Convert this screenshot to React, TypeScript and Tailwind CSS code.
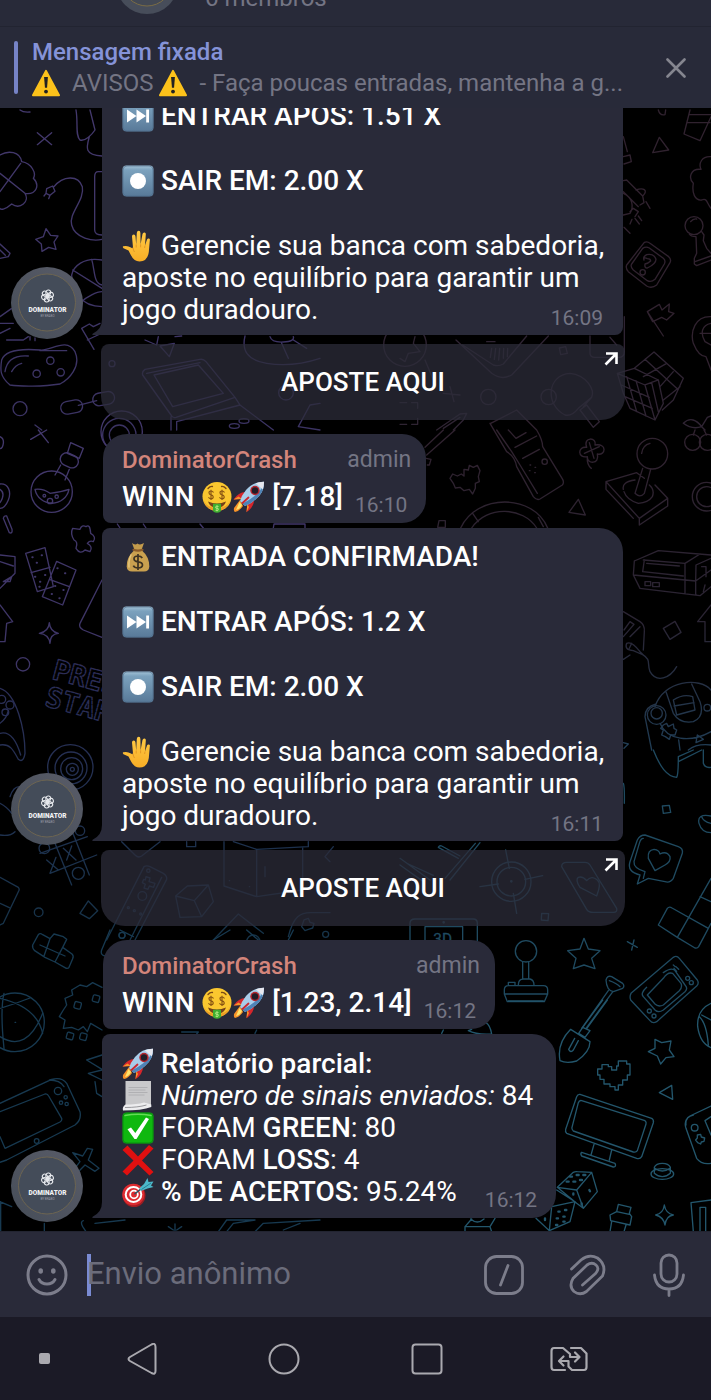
import type { ReactNode } from "react"
import { clsx } from "clsx"

const emojiClass = "-my-1 inline-block h-8 w-8 align-[-3px]"

/* ---------- Emoji ---------- */

function Warning() {
  return (
    <svg viewBox="0 0 32 32" className="inline-block h-7 w-7 shrink-0" role="img" aria-label="aviso">
      <path d="M16 2 31 30H1Z" fill="#fcc21b" stroke="#fcc21b" strokeWidth="2" strokeLinejoin="round" />
      <path d="M13.800 9h4.400l-1 12.500h-2.400Z" fill="#222" />
      <circle cx="16" cy="25.800" r="2.200" fill="#222" />
    </svg>
  )
}

function KeyShape({ children }: { children: ReactNode }) {
  return (
    <svg viewBox="0 0 32 32" className={emojiClass} aria-hidden="true">
      <defs>
        <linearGradient id="key" x1="0" y1="0" x2="0" y2="1">
          <stop offset="0" stopColor="#a5c4d8" />
          <stop offset=".15" stopColor="#7ba1bd" />
          <stop offset="1" stopColor="#587998" />
        </linearGradient>
      </defs>
      <rect x=".5" y=".5" width="31" height="31" rx="4" fill="url(#key)" />
      <rect x="1" y="1" width="30" height="30" rx="4" fill="none" stroke="#4c6d8b" strokeOpacity=".6" />
      {children}
    </svg>
  )
}

function NextTrack() {
  return (
    <KeyShape>
      <path d="M5 9.500 14.500 16 5 22.500ZM14.500 9.500 24 16l-9.500 6.500ZM24.200 9.500h2.800v13h-2.800Z" fill="#fff" />
    </KeyShape>
  )
}

function Record() {
  return (
    <KeyShape>
      <circle cx="16" cy="16" r="8" fill="#fff" />
    </KeyShape>
  )
}

function Hand() {
  return (
    <svg viewBox="0 0 32 32" className={emojiClass} aria-hidden="true">
      <defs>
        <linearGradient id="hand" x1="0" y1="0" x2="0" y2="1">
          <stop offset="0" stopColor="#ffca45" />
          <stop offset="1" stopColor="#f8ae26" />
        </linearGradient>
      </defs>
      <path
        d="M10 6.500Q10 4.500 11.700 4.500T13.500 6.500L14.200 14.500 14.800 3Q15 .8 16.700.8T18.400 3L18.600 14.300 20.500 4Q21 2.300 22.500 2.500T23.800 4.500L23 15.500 25 9.500Q25.700 8 27 8.500T27.800 10.500L26.800 22Q25.500 31.500 17.500 31.500 12 31.500 8.800 25L6.500 20.500 1.500 18.200Q.3 17 1.200 16.300 5.500 15.300 9 17.500 10.500 19 11 17.500Z"
        fill="url(#hand)"
      />
      <path d="M14.200 14.500v3M18.600 14.300v3M23 15.500l-.4 2.500M11 17.500q.3 3 1.500 4.500" stroke="#e09322" strokeWidth=".9" fill="none" />
    </svg>
  )
}

function MoneyBag() {
  return (
    <svg viewBox="0 0 32 32" className={emojiClass} aria-hidden="true">
      <path d="M10 2Q13 4.500 15.500 2.500 18 4.500 22 2L19.500 9H12.500Z" fill="#c39b4c" />
      <path d="M12.500 9H19.500Q27.500 16 27.300 25.500 27 30.500 22 30.500H10Q5 30.500 4.700 25.500 4.500 16 12.500 9Z" fill="#c9a04f" />
      <path d="M9 14Q6.500 19 7 26" stroke="#e4c67e" strokeWidth="1.500" fill="none" strokeLinecap="round" />
      <path d="M11.500 8.800q4.500 1.800 9 0" stroke="#8a5b2a" strokeWidth="2.200" fill="none" strokeLinecap="round" />
      <path d="M20.300 17Q19 15 16 15q-4 0-4 2.800 0 2.500 4 3 4.500.5 4.500 3.200T16 27q-3.500 0-4.700-2.300M16 13v16" stroke="#3d3222" strokeWidth="1.700" fill="none" />
    </svg>
  )
}

function MoneyFace() {
  return (
    <svg viewBox="0 0 32 32" className={emojiClass} aria-hidden="true">
      <circle cx="16" cy="15.500" r="14.500" fill="#fbc72f" />
      <path d="M2.500 19Q6 30 16 30t13.500-11Q26 27 16 27T2.500 19Z" fill="#ee9d26" />
      <path d="M7 7.500q2-2.300 4.500-2M25 7.500q-2-2.300-4.500-2" stroke="#7a4a16" strokeWidth="1.300" fill="none" strokeLinecap="round" />
      <path
        d="M12.500 11.500q-.8-1.500-2.500-1.500-2 0-2 1.800t2 2 2.200 2-2.200 2q-1.700 0-2.500-1.500M10 8.700v10.200M23.500 11.500q-.8-1.500-2.500-1.500-2 0-2 1.800t2 2 2.200 2-2.200 2q-1.700 0-2.500-1.500M21 8.700v10.200"
        stroke="#8a5613"
        strokeWidth="1.200"
        fill="none"
      />
      <path d="M7 20.500Q16 24.500 25 20.500 23 27 16 27T7 20.500Z" fill="#75421a" />
      <path d="M12 22.800h8V29q0 2.800-4 2.800T12 29Z" fill="#3fae31" />
      <path d="M17.500 25.500q-3-1-3 .6t1.500 1.200 1.500 1.300-3 .6M16 24.300v6" stroke="#b6ec83" strokeWidth=".9" fill="none" />
    </svg>
  )
}

function Rocket() {
  return (
    <svg viewBox="0 0 32 32" className={emojiClass} aria-hidden="true">
      <path d="M7 19 1 27q-.5 3.500 1 4 4-.5 8-6Z" fill="#f79329" />
      <path d="M6.500 21 3 29q4-.5 6-5Z" fill="#fde36b" />
      <path d="M13 11Q6 10.500.5 18.500L9 18ZM21 19Q21 26 13.500 31.300L14.300 23Z" fill="#d5262c" />
      <path d="M.5 18.500 5.500 15.500 9 18ZM13.500 31.300 16 26 14.300 23Z" fill="#f79329" />
      <path d="M31 .8Q20 .5 13 9 8.500 14.500 7 20L12 25q6.500-2.500 11-7Q31.500 11 31 .8Z" fill="#a8cdea" />
      <path d="M31 .8Q29 9.500 21.500 15 16 19.500 9.500 22.500L12 25q6.500-2.500 11-7Q31.500 11 31 .8Z" fill="#4e83b7" />
      <path d="M31 .8Q26.500.8 22.800 2.300L29.700 8.500Q31.200 4.800 31 .8Z" fill="#e7e7ee" />
      <circle cx="22" cy="9.500" r="4.700" fill="#b4262f" />
      <circle cx="22" cy="9.500" r="3.200" fill="#211d29" />
      <path d="M15.500 16.500 9.500 22" stroke="#cc2730" strokeWidth="1.800" strokeLinecap="round" />
    </svg>
  )
}

function PageCurl() {
  return (
    <svg viewBox="0 0 32 32" className={emojiClass} aria-hidden="true">
      <path d="M3.500 1H29V26H3.500Z" fill="#c9c9cb" />
      <path d="M6.500 7.500h19M6.500 10h17M6.500 12.500h19M6.500 15h16" stroke="#b0b0b3" strokeWidth="1" />
      <path d="M3.500 24.500Q15 24.500 22 22.500L29.300 24.500V27Q20 30.500 1 30.500 0 27 3.500 24.500Z" fill="#ececee" />
      <path d="M3 27.500Q16 27.500 24.500 25" stroke="#98989c" strokeWidth="1" fill="none" />
    </svg>
  )
}

function CheckMark() {
  return (
    <svg viewBox="0 0 32 32" className={emojiClass} aria-hidden="true">
      <rect x=".5" y=".5" width="31" height="31" rx="4" fill="#0fb80f" />
      <rect x="1" y="1" width="30" height="30" rx="4" fill="none" stroke="#067f10" strokeOpacity=".7" />
      <path d="M3 3.500Q16 1 29 3.500" stroke="#63dd55" strokeWidth="1.500" fill="none" strokeLinecap="round" />
      <path d="M5.500 17.300 9 15.500 13.300 21 24 5.500 27 7 14.500 27H12.500Z" fill="#fff" />
    </svg>
  )
}

function CrossMark() {
  return (
    <svg viewBox="0 0 32 32" className={emojiClass} aria-hidden="true">
      <path d="M5.500 1.500 16 12.500 27 1 31.500 4.500 20 16.500 31.500 28 27.500 31.500 16 20.500 5 31.500.5 27.500 11.500 16.500.5 6Z" fill="#e01010" />
    </svg>
  )
}

function Dart() {
  return (
    <svg viewBox="0 0 32 32" className={emojiClass} aria-hidden="true">
      <ellipse cx="12" cy="19.500" rx="11.500" ry="11.500" fill="#9e1d22" />
      <ellipse cx="11.300" cy="18.500" rx="11" ry="10.800" fill="#dd2b30" />
      <ellipse cx="11.500" cy="18.500" rx="7.800" ry="7.500" fill="none" stroke="#fff" strokeWidth="2" />
      <circle cx="12" cy="18.500" r="3.800" fill="#dd2b30" stroke="#fff" strokeWidth="1.800" />
      <path d="M12.500 18.200 22 10.500" stroke="#2f5260" strokeWidth="1.500" />
      <path d="M17.500 12 22 8 25.500 2 26.500 6 31.500 5.500 29 9.500 31.500 11 25.500 12.500 19 15Z" fill="#4cb8c9" />
      <path d="M19.500 13.500 29 7" stroke="#2a7f93" strokeWidth="1" />
    </svg>
  )
}

/* ---------- Wallpaper ---------- */

// Every patch is drawn on a grid three times finer than the screen.
function Patch({ x, y, children }: { x: number; y: number; children: ReactNode }) {
  return <g transform={`translate(${x} ${y}) scale(0.33333)`}>{children}</g>
}

function Wallpaper() {
  return (
    <svg
      viewBox="0 108 711 1123"
      preserveAspectRatio="xMidYMid slice"
      className="absolute inset-0 h-full w-full"
      fill="none"
      strokeWidth="4"
      strokeLinecap="round"
      strokeLinejoin="round"
      aria-hidden="true"
    >
      <defs>
        <linearGradient id="wallA" gradientUnits="userSpaceOnUse" x1="0" y1="0" x2="0" y2="960">
          <stop offset="0" stopColor="#43386c" />
          <stop offset="1" stopColor="#3b3363" />
        </linearGradient>
        <linearGradient id="wallE" gradientUnits="userSpaceOnUse" x1="0" y1="0" x2="0" y2="900">
          <stop offset="0" stopColor="#2f2d5a" />
          <stop offset="1" stopColor="#153348" />
        </linearGradient>
        <linearGradient id="wallC" gradientUnits="userSpaceOnUse" x1="0" y1="0" x2="0" y2="960">
          <stop offset="0" stopColor="#30222f" />
          <stop offset=".6" stopColor="#2a2433" />
          <stop offset="1" stopColor="#203d55" />
        </linearGradient>
      </defs>

      <g stroke="url(#wallA)">
        <Patch x={0} y={110}>
          <path d="M112 68 155 104M155 68 112 104" />
          <path d="M0 135C25 120 60 125 65 155C95 160 110 190 100 205C120 225 110 255 75 250C90 275 60 300 35 282C15 300 0 300 0 295M0 245 62 160M0 190 75 250" />
          <path d="M160 232C190 195 235 195 247 230C255 270 205 310 215 345C225 385 280 395 306 388M140 236 158 228 165 244 150 256 138 250ZM138 250 132 258M150 256 146 266" />
          <path d="M138 356 152 376 174 378 162 396 168 418 146 412 126 424 124 402 107 388 130 380Z" />
          <path d="M306 185H295Q284 185 284 200V360Q284 375 306 375" />
          <path d="M228 0C235 40 225 75 240 90C255 95 275 75 285 60L270 0M268 80C260 110 250 135 306 138M60 0Q70 8 90 6" />
          <path d="M306 450C250 440 220 470 215 495C215 540 240 590 306 590M218 480 306 535M275 448C285 480 280 520 306 525M245 575C260 560 290 545 306 545" />
          <path d="M0 402 30 430 25 440 0 445M0 420 16 436M0 620 34 596M0 640H40M20 690H70L85 680M0 670 30 655M90 690V680M105 692V684" />
          <path d="M5 750C15 720 60 715 120 720C150 725 200 680 225 725C245 770 205 810 180 822C130 830 60 830 30 825C0 800 0 780 5 750ZM15 785C20 750 45 735 85 738M35 785Q45 765 65 760M120 722H200" />
          <circle cx="151" cy="752" r="11" />
          <circle cx="110" cy="791" r="11" />
          <circle cx="182" cy="787" r="11" />
          <path d="M245 655 268 642 280 650 300 640M262 690 300 672M245 655 282 718" />
          <path d="M480 708 523 700 508 740ZM435 690 470 705 475 680M525 680 545 678" />
          <path d="M735 678C725 720 740 750 800 760C850 768 900 765 960 745M810 680Q815 698 850 696T880 680M845 700 865 745M880 690 920 715" />
          <circle cx="336" cy="761" r="9" />
          <circle cx="60" cy="896" r="21" />
          <rect x="182" y="872" width="66" height="38" rx="19" transform="rotate(-10 215 891)" />
          <rect x="278" y="847" width="66" height="38" rx="19" transform="rotate(-10 311 866)" />
          <path d="M235 886 290 872" />
          <path d="M428 795Q425 785 435 778L600 748Q610 746 618 755L705 862L528 922Q518 925 513 915ZM462 795 595 765 670 850 518 890ZM440 790 600 758M513 920V960M705 862 720 885 530 935V960M720 885 820 960" />
          <ellipse cx="703" cy="948" rx="15" ry="7" />
          <ellipse cx="732" cy="933" rx="15" ry="7" />
          <circle cx="358" cy="975" r="50" />
          <circle cx="358" cy="975" r="30" />
          <circle cx="858" cy="848" r="22" />
          <path d="M105 945 125 960M895 950 930 885 960 880M895 950 960 960" />
        </Patch>
        <Patch x={0} y={430}>
          <path d="M92 28 140 0M115 0 145 38M0 20Q12 25 10 40T0 56" />
          <circle cx="155" cy="185" r="62" />
          <path d="M105 178Q130 175 150 190 185 185 207 178A52 52 0 0 1 105 178M165 135 182 105M195 150 208 118M212 38 250 55 238 85 202 70Z" />
          <rect x="180" y="72" width="56" height="38" rx="19" transform="rotate(25 208 91)" />
          <circle cx="133" cy="197" r="4" />
          <circle cx="170" cy="200" r="5" />
          <circle cx="150" cy="213" r="8" />
          <path d="M0 162C25 160 35 185 25 210Q15 235 0 235M0 178Q18 190 0 218M10 265 28 308Q38 312 36 298L20 258Q12 256 10 265" />
          <path d="M218 295 240 298Q245 283 258 290 270 280 272 310 290 320 280 335 270 330 262 340 280 350 270 365L255 360Q240 375 228 355 235 335 222 330 210 310 218 295Z" />
          <path d="M77 370 135 353 160 470 112 485ZM93 428 150 412M170 394 228 420 188 525 127 500ZM148 448 208 470" />
          <path d="M97 382h1M125 376h1M110 398h1M105 440h1M120 455h1M135 435h1M118 470h1M172 415h1M195 430h1M165 468h1M155 492h1M190 480h1M178 505h1" strokeWidth="6" />
          <path d="M0 375 45 380V430L0 475M0 395 40 408M10 455 35 440 30 455ZM0 525 38 575 20 580 15 635H0" />
          <path d="M306 450 240 580Q235 592 250 600L306 622" />
          <path d="M148 578Q150 605 175 610 150 612 150 640 146 612 118 610 146 605 148 578Z" />
          <circle cx="69" cy="703" r="20" />
          <circle cx="365" cy="5" r="62" />
          <path d="M352 282 360 294M430 282 438 294M600 282 610 294M820 294 822 282H915V294" />
        </Patch>
      </g>

      <g stroke="url(#wallE)">
        <Patch x={0} y={640}>
          <g transform="rotate(15 180 100)" fontFamily="DejaVu Sans Mono" fontSize="84" fontWeight="700" strokeDasharray="9 4">
            <text x="158" y="122">PRESS</text>
            <text x="158" y="206">START</text>
          </g>
          <path d="M0 145C50 160 75 270 75 340Q70 370 55 358C40 330 30 310 0 315M0 250Q20 235 24 215M0 280Q40 270 62 345" />
          <circle cx="5" cy="178" r="12" />
          <circle cx="30" cy="195" r="12" />
          <circle cx="16" cy="217" r="10" />
          <circle cx="217" cy="388" r="6" />
          <circle cx="217" cy="388" r="18" />
          <circle cx="215" cy="386" r="33" />
          <circle cx="213" cy="384" r="48" />
          <circle cx="211" cy="382" r="68" />
          <path d="M30 470Q40 440 58 440M0 490Q20 500 35 520M0 585Q30 590 45 575" />
          <path d="M120 640 262 590M150 700 290 645M165 610 215 735M215 570 268 705M140 660 175 690M168 652 150 700M190 625 228 660M215 618 200 660" />
          <circle cx="235" cy="700" r="18" />
          <circle cx="133" cy="625" r="16" />
          <circle cx="240" cy="572" r="14" />
          <path d="M0 712 55 742Q60 748 55 755L10 850 0 855M0 790 28 803M240 820 265 783 293 812 268 836Z" />
          <circle cx="116" cy="817" r="13" />
          <path d="M432 680Q440 675 450 680L490 700Q502 708 500 718L405 900M432 680 320 900M485 712 390 900" />
          <path d="M438 710 450 714 447 725 465 730 461 742 448 738 444 748 432 744 436 733 427 728 431 718 436 720Z" />
          <circle cx="445" cy="692" r="5" />
          <circle cx="427" cy="768" r="13" />
          <circle cx="385" cy="803" r="3" />
          <circle cx="403" cy="812" r="3" />
          <circle cx="422" cy="822" r="3" />
          <circle cx="366" cy="886" r="9" />
          <path d="M527 768 562 738 625 735 640 785 605 830 540 832ZM527 768 583 782 625 735M583 782 605 830" />
          <path d="M672 605V738L770 770V628L925 620V605M770 770 908 750V622M770 628 700 605M795 680V710M688 722h1M748 740h1" />
          <path d="M365 605 405 645Q415 655 425 648L480 605M560 605V620H587V605M640 900 715 822 790 880M865 890C880 830 900 815 940 818H990M912 840 925 835 930 847 942 850 938 864 925 868 915 872 905 860ZM1000 620 975 650 990 665" />
          <circle cx="760" cy="905" r="20" />
          <circle cx="977" cy="883" r="9" />
        </Patch>
      </g>

      <g stroke="#173950">
        <Patch x={0} y={930}>
          <path d="M98 45 115 14Q120 8 128 14L150 26 162 12 190 20 200 28 188 52 216 72Q222 78 218 86L207 112Q203 118 195 113L165 96 135 82 104 62Q96 54 98 45ZM150 26 132 78M188 52 165 96M120 45 195 78" />
          <path d="M360 0 400 20M330 0 305 60Q300 75 315 78M640 30 690 0M740 0 775 30M865 30 880 0" />
          <circle cx="366" cy="16" r="9" />
          <circle cx="45" cy="277" r="88" />
          <path d="M0 205Q110 230 128 310M0 235Q50 220 90 204M12 190Q0 240 12 355M0 320Q80 370 128 250M45 277h2" />
          <path d="M306 172 278 158 260 170 240 165 215 180 218 195 195 205 200 225 190 240 178 260 195 270 190 295 215 292 235 300 250 290 262 305 272 280 306 300" />
          <rect x="223" y="216" width="20" height="20" rx="4" transform="rotate(15 233 226)" />
          <rect x="278" y="196" width="20" height="20" rx="4" transform="rotate(15 288 206)" />
          <rect x="200" y="308" width="20" height="20" rx="4" transform="rotate(15 210 318)" />
          <rect x="240" y="310" width="20" height="20" rx="4" transform="rotate(15 250 320)" />
          <path d="M306 375 260 390 306 418M306 420 265 430 306 450M285 455 290 490 306 500" />
          <path d="M0 520 155 448Q185 440 200 460L240 545Q245 570 225 585L20 690 0 697M0 545 135 492Q142 490 146 498L185 565Q187 572 180 576L15 655 0 620M148 450Q180 450 192 470" />
          <circle cx="174" cy="483" r="11" />
          <circle cx="197" cy="502" r="5" />
          <circle cx="183" cy="518" r="5" />
          <circle cx="200" cy="522" r="5" />
          <circle cx="110" cy="633" r="7" />
          <path d="M218 668 248 678 262 655 278 658 265 690 297 715 285 724 255 705 235 725 222 718 240 695Z" />
          <path d="M0 815 35 830M2 815V905M133 880V905M250 872Q240 875 248 890L258 905M285 880 375 870M525 882V905M505 890 520 900M545 890 530 900M655 905 680 870H765M680 905 700 880 765 870M765 905 790 880 960 870M850 900 900 880" />
          <path d="M545 306H595L590 312M770 300 765 310" />
        </Patch>
      </g>

      <g stroke="#30222f">
        <Patch x={400} y={110}>
          <path d="M870 0 852 72 900 92 933 20M862 38H930M868 14H933M778 82 806 120 758 128ZM775 0Q780 18 795 14L797 0" />
          <path d="M933 140C905 138 895 160 903 178C870 175 865 205 880 220C875 250 885 272 905 270C922 262 920 280 933 295" />
          <path d="M670 212 680 210 728 258 732 278 720 285M670 245 715 290M708 240C730 232 745 240 730 256M670 250C698 262 702 290 690 310L670 315M690 305 700 295 715 305 705 320M715 318 725 332M705 325 718 342M696 328 690 342M738 275 750 295M672 352 690 370" />
          <path d="M670 80 682 125M670 140 690 135 694 155 672 162" />
          <circle cx="882" cy="347" r="27" />
          <path d="M868 372Q872 380 888 380L890 430 883 445V462L890 467 933 450M905 365 912 375 910 392 920 415 933 430M885 455 933 438M872 335Q880 325 890 327" />
          <path d="M733 397Q742 393 750 400L806 440Q815 448 810 458L770 525Q755 537 740 528L685 485Q676 475 680 465Z" />
          <path d="M728 415Q738 408 748 414L790 445Q798 452 793 462L765 508Q753 518 742 512L700 480Q690 470 695 462Z" />
          <path d="M732 450Q730 440 742 446 752 446 752 453 745 460 735 462 733 475 742 474 768 462 768 448 762 430 740 434 728 440 732 450" />
          <circle cx="728" cy="487" r="8" />
          <path d="M742 605 778 583 786 600 808 582 806 605 822 610 800 630 785 622 758 635ZM742 605 790 678" />
          <path d="M933 620C885 618 870 665 880 700C890 725 905 740 918 740L933 780M933 640C905 645 900 670 915 695L933 705M900 670H933" />
        </Patch>
      </g>

      <g stroke="#2f2433">
        <Patch x={400} y={110}>
          <path d="M652 790 735 825 765 930 690 895 670 850ZM652 790 703 775 775 810 735 825M775 810 790 880 765 930M703 775 762 726 850 805 820 870 787 900M735 748 830 835M800 760 730 800M820 785 780 830M840 830 790 870M664 825 748 862M675 860 757 895M680 800 710 905M708 812 738 918M755 818 775 905" />
          <path d="M495 915C435 885 440 795 510 790C560 795 585 840 575 862L535 895Q515 920 495 915ZM540 900 560 885 598 935 580 952ZM575 862 550 890" />
          <circle cx="446" cy="861" r="23" />
          <circle cx="265" cy="861" r="23" />
          <circle cx="15" cy="705" r="64" />
          <path d="M0 745 15 755 25 730 60 725 40 700 45 680M75 750 100 810M168 690 275 790Q305 812 335 795L445 678M188 705 280 765Q295 770 310 762L380 678M275 715 271 742M287 715 283 748M299 715 296 750M311 715 310 745M323 715 322 740M260 695H285" />
          <path d="M478 714 497 710 502 730 482 734ZM130 850 180 855M150 830 162 875M570 678V730Q570 742 585 742H655Q673 742 673 725V620M630 682 650 705" />
          <path d="M0 878H20M35 878H53V895M53 925V943H35M0 943H20M110 960 180 912 200 910 190 930 160 960M130 955 180 922" />
          <path d="M850 940C870 920 890 930 905 950L922 922 933 918M850 940C870 955 890 955 905 950L915 960" />
        </Patch>
      </g>

      <g stroke="url(#wallC)">
        <Patch x={400} y={430}>
          <path d="M270-20 320 65Q345 80 350 110L400 200Q410 212 420 207L487 165Q493 158 488 148L428 50Q428 30 410 0L350-60 272-20M290 0 335 65 360 105 412 190M325 0 348 25 378 8M345 52 410 18M368 85 418 58" />
          <circle cx="434" cy="95" r="8" />
          <path d="M388 122h2M405 112h2M390 105h2M404 128h2" />
          <path d="M80 75 165 0M75 52 130 0M78 85 93 88 88 105 82 105" />
          <path d="M150 145 158 132 172 138 184 132 192 138 192 118 205 120 208 106 220 112 232 106 240 122 235 140 238 155 226 160 226 175 218 192 208 178 192 182 180 172 166 174 160 160Z" />
          <path d="M560 52C548 18 592 22 585 45C622 38 618 78 592 72C600 105 560 102 562 80C532 86 532 48 560 52ZM553 70 598 50M568 38 582 85M562 80Q560 105 574 115" />
          <circle cx="757" cy="71" r="46" />
          <path d="M752 118 733 190Q720 205 705 190L728 115M725 70Q728 45 750 40M618 155 710 128 733 145M765 165 803 205 718 265 618 155V178L700 265M718 285 803 228V205M718 265V285M670 178Q665 155 705 150M748 165Q765 180 757 200 745 218 715 220 680 210 672 185" />
          <circle cx="878" cy="37" r="24" />
          <circle cx="922" cy="37" r="24" />
          <path d="M885 0 880 15M912 0 920 15M535 208 556 255 507 247Z" />
          <circle cx="920" cy="200" r="43" />
          <circle cx="920" cy="200" r="30" />
          <path d="M182 294C230 190 400 190 443 294M215 294C260 225 370 230 410 294M218 250 235 275M415 262 430 290M117 272H136V292H113Z" />
          <path d="M703 393 775 362 933 375M703 393 700 435 720 475 900 497 933 470M700 435 887 453 933 420M730 390 855 400 900 372M855 400V490M887 453V495M733 390 728 425 850 438M735 455H752V467H735ZM758 458H778V470H758ZM887 453 888 405 933 385M740 400 838 408M905 410H918V440M915 465 910 485" />
          <path d="M670 545 720 575Q735 585 733 605L730 660M690 675 670 688M672 600 690 575 702 583 670 620M720 590 690 620" />
          <path d="M680 640Q695 632 720 665L730 675 700 662Q672 660 680 640ZM695 640 688 655M728 674C755 690 740 700 750 725C770 760 810 745 830 710" />
          <path d="M790 595 825 574 843 607 810 628ZM933 525 893 575H915V635H933" />
          <path d="M765 830C790 750 900 740 933 780M768 822Q735 830 735 860L755 960M820 810Q850 790 878 800L885 840 830 855ZM822 828 882 818M798 785 820 850Q840 882 880 875 915 860 900 815L875 762M780 880C800 930 870 940 933 905M840 960 836 930M865 960Q890 940 933 945M888 938 892 915 910 928ZM670 938 685 942 672 955" />
          <path d="M790 885 800 880 805 890 820 882 822 895 830 900 825 915 812 915 808 928 796 920 785 915 790 900 782 895Z" />
          <circle cx="770" cy="855" r="28" />
          <circle cx="770" cy="850" r="17" />
          <circle cx="922" cy="833" r="10" />
        </Patch>
      </g>

      <g stroke="#1f4a60">
        <Patch x={400} y={750}>
          <path d="M760 0C780 50 800 80 830 82Q835 75 835 20M835 35 905 0M835 20 880 0M910 0V40Q915 55 933 52M787 168 808 166 812 187 790 190ZM933 198Q890 190 897 220 905 248 933 248M933 220Q910 215 905 200M670 100Q674 110 673 160" />
          <path d="M735 255 835 290Q850 295 847 310L820 385Q810 400 795 395L745 385 712 402 720 375Q680 365 690 335L712 270Q720 255 735 255ZM730 265Q722 265 718 280L702 335Q700 355 735 365L730 385" />
          <path d="M765 362 745 325Q742 300 762 298 778 300 780 312 800 302 810 320 813 335 795 345Z" />
          <path d="M933 385 832 562 885 594Q892 596 896 590L933 520M775 525 802 475Q808 468 816 474L925 535M775 525 832 562M900 440 933 455" />
          <path d="M552 565 565 597 600 602 575 625 585 656 552 645 520 656 528 625 503 602 540 597ZM682 575 712 592M702 570 695 600" />
          <circle cx="378" cy="604" r="32" />
          <path d="M368 636V685M386 636V685M355 705Q355 687 370 687H390Q402 690 402 705M325 707H430Q443 707 443 720V732L433 755H322L313 732V720Q313 707 325 707ZM313 732H443M325 705V697H345V705" />
          <path d="M693 730 820 622Q830 615 838 625L892 690Q898 700 890 708L770 815Q758 822 750 812L692 750Q688 740 693 730ZM742 735 790 685Q803 665 818 670L843 700Q848 712 838 722L790 765Q775 772 765 762ZM740 712Q720 730 730 740L765 780Q775 790 790 780L855 725Q865 715 855 705L825 662Q815 650 790 668M820 645 826 650M828 650 836 658M822 655 830 664" />
          <circle cx="863" cy="685" r="6" />
          <circle cx="874" cy="698" r="6" />
          <circle cx="748" cy="783" r="6" />
          <circle cx="762" cy="798" r="6" />
          <path d="M618 690Q622 675 635 680L668 700Q675 708 668 715L640 725Q620 722 618 690ZM628 692Q650 700 660 710M625 722 545 835M637 727 558 835" />
          <path d="M30 573V520Q30 507 45 507H220Q232 507 232 520V573M75 573V530H188V573" />
          <text x="100" y="582" fontFamily="Roboto" fontSize="46" strokeWidth="1" fill="#1f4a60">3D</text>
          <circle cx="131" cy="517" r="2" />
        </Patch>
        <Patch x={400} y={750}>
          <path d="M115 292 175 325M125 288 180 318M115 292Q118 285 125 288M240 278 150 390M226 280 135 385M0 325 90 390M25 342 100 376M0 345 70 395" />
          <circle cx="334" cy="395" r="59" />
          <circle cx="334" cy="395" r="43" />
          <circle cx="334" cy="394" r="2" />
          <path d="M240 410 295 402M375 388 428 377M317 300 328 355M340 430 350 490" />
          <path d="M485 350Q485 337 500 337H555Q565 337 570 345L650 475Q653 487 640 487H580Q565 487 560 478ZM590 438 540 412Q525 390 535 382 548 378 560 392 575 375 592 390 605 400 590 438ZM425 490 446 491 444 512 424 510Z" />
        </Patch>
      </g>

      <g stroke="#23566c">
        <Patch x={400} y={1000}>
          <path d="M325 3H430M608 0 548 82M622 0 560 86M548 82 570 92 555 112 536 100ZM512 88 570 125Q570 155 530 183 500 192 480 182 470 130 512 88ZM535 122 520 150Q512 160 506 148L524 115" />
          <path d="M765 118 785 128 813 123 808 150 822 170 798 173 782 192 772 168 745 155 765 145Z" />
          <path d="M933 10Q890 30 893 80 900 130 933 143M905 45 933 60M898 50Q920 70 925 135" />
          <path d="M593 207H606V194H625V200H635V210H650V198H655V183H680V192H690V225H682V240H668V255H655V270H645V260H630V252H612V238H600V225H593Z" />
          <path d="M778 278 815 256 818 298Z" />
          <path d="M540 283 755 355Q762 360 760 368L725 470Q720 478 710 475L500 400Q495 395 497 388L530 290Q533 282 540 283ZM545 302 735 362Q740 366 738 372L712 452Q708 458 700 456L520 393Q514 388 516 382L535 308Q538 300 545 302ZM582 433 573 465M635 450 628 480M545 457 645 490Q650 500 640 501L545 468Q540 462 545 457Z" />
          <path d="M933 318 870 348Q850 360 858 385L890 475Q905 495 933 490M933 350 915 362 933 405M858 375Q855 350 880 345" />
          <circle cx="884" cy="383" r="10" />
          <path d="M892 405 902 403 904 411 914 414 912 424 904 426 902 432 893 428 887 420 892 414Z" />
          <ellipse cx="787" cy="522" rx="34" ry="16" />
          <path d="M763 520V502Q768 490 787 490T811 502V520Q800 530 787 530T763 520M763 504Q787 522 811 504" />
          <path d="M520 517Q525 514 532 515L575 517 592 575 550 625 530 610 472 562ZM472 562 530 570 575 517M530 570 550 625M455 620 525 605 510 665 448 692 408 655M470 570 525 605M455 620 448 692" />
          <path d="M510 530h6M530 525h6M550 525h6M500 545h6M520 545h6M540 540h6M568 570l2 4M520 580v4M545 610v4M475 635h4M495 630h4M470 655h4M490 650h4M468 675h4M490 665h4M435 655v5" strokeWidth="7" />
          <path d="M655 613 693 622 688 640 695 650 690 675 632 662 630 645 650 635ZM650 635 688 643M630 695 635 665M672 695 678 675" />
          <path d="M793 615Q797 640 820 645 798 648 795 675 790 650 767 645 790 640 793 615Z" />
          <path d="M880 695 873 608 933 600M900 695V622H917V695M195 680 215 657M195 695V680H270L275 695M270 680 285 655M212 657Q232 675 252 657" />
          <path d="M125 100 130 90M205 92Q230 105 275 102 270 75 258 68M205 92 215 88" />
        </Patch>
      </g>
    </svg>
  )
}

/* ---------- Chat pieces ---------- */

function Avatar() {
  return (
    <svg viewBox="0 0 72 72" className="-mb-1 h-[72px] w-[72px] shrink-0" role="img" aria-label="Dominator">
      <defs>
        <linearGradient id="avatar" x1="0" y1="1" x2="1" y2="0">
          <stop offset="0" stopColor="#464d58" />
          <stop offset="1" stopColor="#595c68" />
        </linearGradient>
      </defs>
      <circle cx="36" cy="36" r="36" fill="url(#avatar)" />
      <circle cx="36" cy="35.500" r="28.500" fill="#444c59" stroke="#6d6551" strokeWidth="1" />
      <g fill="none" stroke="#e6e8ec" strokeWidth="1.100">
        {[12, 72, 132, 192, 252, 312].map((angle) => (
          <ellipse key={angle} cx="36.500" cy="25.500" rx="2.400" ry="2.600" transform={`rotate(${angle} 36.5 29)`} />
        ))}
        <circle cx="36.500" cy="29" r="1.300" fill="#e6e8ec" />
      </g>
      <text x="36.500" y="45" textAnchor="middle" fill="#f1f2f4" fontFamily="Roboto" fontSize="6.500" fontWeight="900">
        DOMINATOR
      </text>
      <text x="36.500" y="50" textAnchor="middle" fill="#9b9fa8" fontFamily="Roboto" fontSize="3">
        BY BRABO
      </text>
    </svg>
  )
}

function Tail() {
  return (
    <svg viewBox="0 0 11 16" className="absolute bottom-0 -left-[10px] h-4 w-[11px]" aria-hidden="true">
      <path d="M10 0H11V16H1Q-.5 15.500 1 14.500 10 10 10 0Z" fill="#292a39" />
    </svg>
  )
}

function Time({ children, className }: { children: string; className?: string }) {
  return <time className={clsx("text-[21px] leading-8 font-normal text-[#747584]", className)}>{children}</time>
}

function EntryMessage({ after, time }: { after: string; time: string }) {
  return (
    <div className="flex items-end gap-[19px] pl-[11px]">
      <Avatar />
      <div className="relative flex w-full max-w-[521px] flex-col gap-[33px] rounded-t-lg rounded-tr-3xl rounded-br-lg bg-[#292a39] pt-[13px] pr-4 pb-[9px] pl-5">
        <Tail />
        <p className="font-medium">
          <MoneyBag /> ENTRADA CONFIRMADA!
        </p>
        <p className="font-medium">
          <NextTrack /> ENTRAR APÓS: {after} X
        </p>
        <p className="font-medium">
          <Record /> SAIR EM: 2.00 X
        </p>
        <p>
          <Hand /> Gerencie sua banca com sabedoria, aposte no equilíbrio para garantir um jogo duradouro.
          <Time className="float-right mt-2 mr-1 -mb-2">{time}</Time>
        </p>
      </div>
    </div>
  )
}

function BetButton() {
  return (
    <button
      type="button"
      className="relative mt-[9px] mb-[14px] ml-[101px] h-[76px] w-full max-w-[524px] shrink-0 rounded-t-lg rounded-b-3xl bg-[#2c2c39]/75 text-[26px] font-medium"
    >
      APOSTE AQUI
      <svg viewBox="0 0 14 14" className="absolute top-2 right-[7px] h-[14px] w-[14px]" aria-hidden="true">
        <path d="M2 1.500H12.500V12M12.500 1.500 1.500 12.500" stroke="#fff" strokeWidth="2.600" fill="none" />
      </svg>
    </button>
  )
}

function WinMessage({ result, time }: { result: string; time: string }) {
  return (
    <div className="mb-[5px] ml-[103px] w-fit rounded-3xl rounded-bl-lg bg-[#292a39] py-[10px] pr-[15px] pl-[19px]">
      <div className="mb-[5px] flex justify-between">
        <span className="text-[24px] font-medium text-[#d3857b]">DominatorCrash</span>
        <span className="text-[23px] text-[#747584]">admin</span>
      </div>
      <div className="flex gap-3 pr-1 font-medium">
        <span>
          WINN <MoneyFace />
          <Rocket /> {result}
        </span>
        <Time className="-mb-2 pt-2">{time}</Time>
      </div>
    </div>
  )
}

function ReportMessage() {
  return (
    <div className="flex items-end gap-[19px] pl-[11px]">
      <Avatar />
      <div className="relative rounded-3xl rounded-tl-lg rounded-bl-none bg-[#292a39] pt-[14px] pr-[19px] pb-[10px] pl-5">
        <Tail />
        <p className="font-medium">
          <Rocket /> Relatório parcial:
        </p>
        <p>
          <PageCurl /> <em>Número de sinais enviados:</em> 84
        </p>
        <p>
          <CheckMark /> FORAM <strong className="font-medium">GREEN</strong>: 80
        </p>
        <p>
          <CrossMark /> FORAM <strong className="font-medium">LOSS</strong>: 4
        </p>
        <div className="flex justify-between gap-7">
          <p>
            <Dart /> <strong className="font-medium">% DE ACERTOS:</strong> 95.24%
          </p>
          <Time className="-mb-2 pt-2">16:12</Time>
        </div>
      </div>
    </div>
  )
}

/* ---------- Bars ---------- */

function Header() {
  return (
    <header className="shrink-0 bg-[#282a39]">
      <div className="flex h-[26px] items-end gap-[27px] overflow-hidden pb-3 pl-[116px]">
        <svg viewBox="0 0 62 62" className="h-[62px] w-[62px] shrink-0" aria-hidden="true">
          <circle cx="31" cy="31" r="31" fill="#474d5a" />
          <circle cx="31" cy="29" r="25" fill="#424854" stroke="#7a6c45" />
        </svg>
        <span className="text-[24px] leading-8 text-[#747584]">6 membros</span>
      </div>
      <div className="flex h-[82px] items-center border-t border-[#222431] pr-[21px] pl-[14px]">
        <div className="h-[53px] w-1 shrink-0 rounded-full bg-[#7683c6]" />
        <div className="ml-[14px] min-w-0 flex-1 text-[24px] leading-[31px]">
          <p className="font-medium text-[#8593d8]">Mensagem fixada</p>
          <p className="flex items-center whitespace-nowrap text-[#747584]">
            <Warning />
            <span className="mr-[6px] ml-3">AVISOS</span>
            <Warning />
            <span className="ml-3">- Faça poucas entradas, mantenha a g...</span>
          </p>
        </div>
        <button type="button" aria-label="Fechar" className="p-1">
          <svg viewBox="0 0 20 20" className="h-5 w-5" aria-hidden="true">
            <path d="M1.500 1.500 18.500 18.500M18.500 1.500 1.500 18.500" stroke="#85868f" strokeWidth="2.600" strokeLinecap="round" />
          </svg>
        </button>
      </div>
    </header>
  )
}

function Composer() {
  return (
    <form className="flex h-[86px] shrink-0 items-center border-t border-[#222431] bg-[#292a39] pr-[25px] pl-[26px]">
      <button type="button" aria-label="Emojis">
        <svg viewBox="0 0 42 42" className="h-[42px] w-[42px]" fill="none" stroke="#7c7d8b" strokeWidth="3" strokeLinecap="round" aria-hidden="true">
          <circle cx="21" cy="21" r="19" />
          <path d="M13 25.500Q15.500 30 21 30T29 25.500" />
          <ellipse cx="14.700" cy="17" rx="2.300" ry="2.800" fill="#7c7d8b" stroke="none" />
          <ellipse cx="27.300" cy="17" rx="2.300" ry="2.800" fill="#7c7d8b" stroke="none" />
        </svg>
      </button>
      <span className="ml-[19px] h-[42px] w-1 bg-[#7a8bd3]" />
      <input
        type="text"
        aria-label="Mensagem"
        placeholder="Envio anônimo"
        className="-ml-1 min-w-0 flex-1 bg-transparent text-[31px] text-white caret-transparent outline-none placeholder:text-[#6b6c7b]"
      />
      <div className="flex items-center gap-[45px]">
        <button type="button" aria-label="Comandos">
          <svg viewBox="0 0 40 40" className="h-10 w-10" fill="none" stroke="#7c7d8b" strokeWidth="2.800" strokeLinecap="round" aria-hidden="true">
            <rect x="1.500" y="1.500" width="37" height="37" rx="11" />
            <path d="M24 10.500 16.500 30" />
          </svg>
        </button>
        <button type="button" aria-label="Anexar">
          <svg viewBox="0 0 38 42" className="h-[42px] w-[38px]" fill="none" stroke="#7c7d8b" strokeWidth="2.800" strokeLinecap="round" aria-hidden="true">
            <path d="M2.500 15 12 6Q20-.5 28.500 4 38 11 33.500 22L17.500 37.500Q11 42 5 37.500-.5 32 4 24.500L18 11Q23 7.500 27 11T26.500 19.500L13.500 31" />
          </svg>
        </button>
        <button type="button" aria-label="Gravar áudio">
          <svg viewBox="0 0 34 44" className="h-11 w-[34px]" fill="none" stroke="#7c7d8b" strokeWidth="2.800" strokeLinecap="round" aria-hidden="true">
            <rect x="9" y="2" width="16" height="27" rx="8" />
            <path d="M2.500 22Q4 36 17 36T31.500 22M17 36V42.500" />
          </svg>
        </button>
      </div>
    </form>
  )
}

function SystemNav() {
  return (
    <nav className="flex h-[83px] shrink-0 items-center bg-[#1b1a26]">
      <div className="w-[71px] pl-[39px]">
        <div className="h-[11px] w-[11px] rounded-xs bg-[#aaa9af]" />
      </div>
      <div className="grid flex-1 grid-cols-4 justify-items-center">
        <button type="button" aria-label="Voltar">
          <svg viewBox="0 0 32 32" className="h-8 w-8" fill="none" stroke="#aaa9af" strokeWidth="2" strokeLinejoin="round" aria-hidden="true">
            <path d="M25.500 1.500Q29.500-.5 29.500 4V28Q29.500 32 25.500 30L4 18Q1 16 4 14Z" />
          </svg>
        </button>
        <button type="button" aria-label="Início">
          <svg viewBox="0 0 32 32" className="h-8 w-8" fill="none" stroke="#aaa9af" strokeWidth="2" aria-hidden="true">
            <circle cx="16" cy="16" r="14.500" />
          </svg>
        </button>
        <button type="button" aria-label="Recentes">
          <svg viewBox="0 0 32 32" className="h-8 w-8" fill="none" stroke="#aaa9af" strokeWidth="2" aria-hidden="true">
            <rect x="1.500" y="1.500" width="29" height="29" rx="3" />
          </svg>
        </button>
        <button type="button" aria-label="Alternar aplicativo">
          <svg viewBox="0 0 38 26" className="h-[26px] w-[38px]" fill="none" stroke="#aaa9af" strokeWidth="2.200" strokeLinecap="round" strokeLinejoin="round" aria-hidden="true">
            <path d="M15 24H4Q1.500 24 1.500 21V5Q1.500 2 4 2H13L20 8V11H29M25 6.500 29.500 11 25 15.500" />
            <path d="M21 2H31L36.500 7.500V21Q36.500 24 34 24H22L18.500 20.500V15H9.500M13.500 10.500 9 15 13.500 19.500" />
          </svg>
        </button>
      </div>
      <div className="w-[71px]" />
    </nav>
  )
}

export default function App() {
  return (
    <div className="flex h-screen flex-col overflow-hidden bg-black font-[Roboto,sans-serif] text-white">
      <Header />
      <main className="relative min-h-0 flex-1 overflow-hidden">
        <Wallpaper />
        <div className="relative flex h-full flex-col justify-end pb-[13px] text-[28px] leading-8">
          <EntryMessage after="1.51" time="16:09" />
          <BetButton />
          <WinMessage result="[7.18]" time="16:10" />
          <EntryMessage after="1.2" time="16:11" />
          <BetButton />
          <WinMessage result="[1.23, 2.14]" time="16:12" />
          <ReportMessage />
        </div>
      </main>
      <Composer />
      <SystemNav />
    </div>
  )
}
